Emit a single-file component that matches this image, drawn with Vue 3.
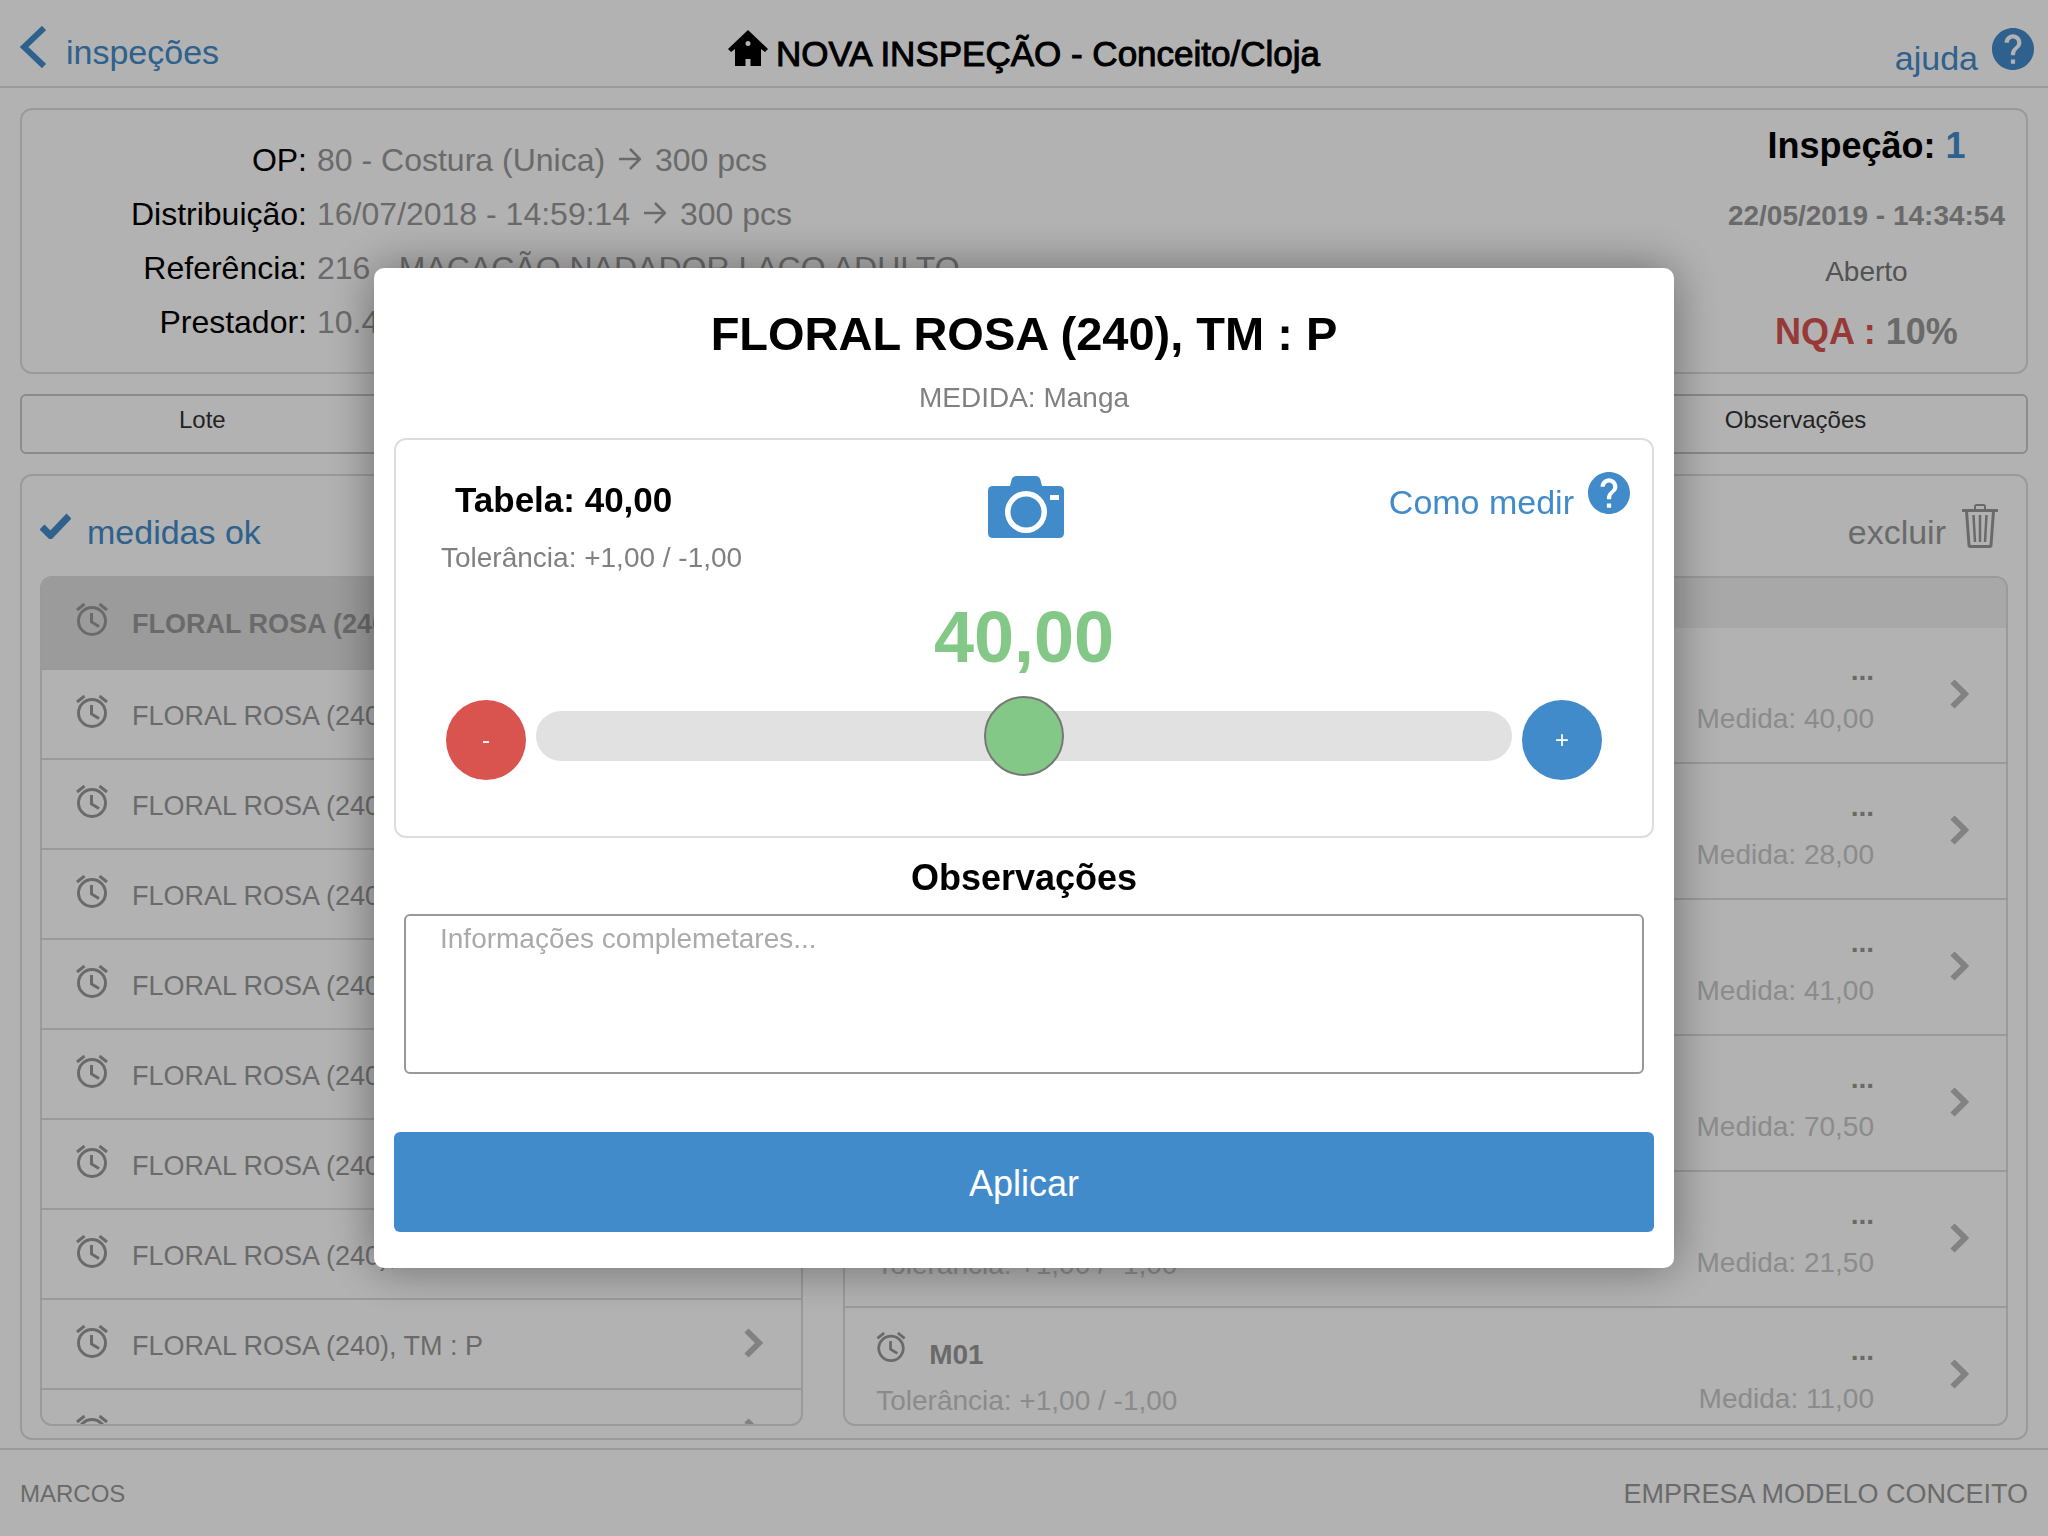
<template>
  <div class="page">
    <header class="topbar">
      <a href="#inspecoes" class="back-link">
        <svg class="back-icon" viewBox="0 0 26 42" aria-hidden="true">
          <path d="M24 2 4 21l20 19" fill="none" stroke="currentColor" stroke-width="6" />
        </svg>
        <span>inspeções</span>
      </a>
      <h1>
        <svg class="home-icon" viewBox="0 0 40 36" aria-hidden="true">
          <path
            fill="currentColor"
            fill-rule="evenodd"
            d="M20 0 40 19l-3 3-4-3v17H22.500v-7h-5v7H7V19l-4 3-3-3ZM20 11a2.500 2.500 0 1 0 0 5 2.500 2.500 0 0 0 0-5Z"
          />
        </svg>
        <span>NOVA INSPEÇÃO - Conceito/Cloja</span>
      </h1>
      <a href="#ajuda" class="help-link">
        <span>ajuda</span>
        <svg class="help-icon" viewBox="2 2 20 20" aria-hidden="true">
          <path :d="icons.help" fill="currentColor" />
        </svg>
      </a>
    </header>

    <main class="content">
      <section class="panel info">
        <dl class="details">
          <template v-for="item in details" :key="item.label">
            <dt>{{ item.label }}:</dt>
            <dd>
              {{ item.text }}
              <template v-if="item.amount">
                <svg class="arrow-icon" viewBox="0 0 22 24" aria-hidden="true">
                  <path d="M0 12h20M11 2l10 10-10 10" fill="none" stroke="currentColor" stroke-width="2.500" />
                </svg>
                {{ item.amount }}
              </template>
            </dd>
          </template>
        </dl>
        <div class="summary">
          <p class="summary-number">Inspeção: <span>1</span></p>
          <p class="summary-date">22/05/2019 - 14:34:54</p>
          <p class="summary-status">Aberto</p>
          <p class="summary-nqa">NQA : <span>10%</span></p>
        </div>
      </section>

      <nav class="tabs">
        <button type="button" class="tab-lote">Lote</button>
        <button type="button" class="tab-observacoes">Observações</button>
      </nav>

      <section class="panel measures">
        <div class="toolbar">
          <button type="button" class="toolbar-button ok">
            <svg class="check-icon" viewBox="0 0 31 26" aria-hidden="true">
              <path d="M2 14l8.500 8.500L29 3" fill="none" stroke="currentColor" stroke-width="7" />
            </svg>
            <span>medidas ok</span>
          </button>
          <button type="button" class="toolbar-button remove">
            <span>excluir</span>
            <svg class="trash-icon" viewBox="0 0 36 44" aria-hidden="true">
              <g fill="none" stroke="currentColor">
                <path d="M0 6.500h36" stroke-width="3" />
                <path d="M13 6V2.500q0-1.500 1.500-1.500h7q1.500 0 1.500 1.500V6" stroke-width="2" />
                <path d="M4.500 7l2.500 34q0 1.500 1.500 1.500h19q1.500 0 1.500-1.500L31.500 7" stroke-width="3" />
                <path d="M11.500 11l1.500 27M18 11v27M24.500 11L23 38" stroke-width="2.500" />
              </g>
            </svg>
          </button>
        </div>

        <div class="lists">
          <ul class="list products">
            <li v-for="n in 10" :key="n">
              <button
                type="button"
                class="product"
                :class="{ selected: n === selectedProduct }"
                @click="selectedProduct = n"
              >
                <svg class="alarm-icon" viewBox="0 0 32 33" aria-hidden="true">
                  <path :d="icons.alarm" fill="none" stroke="currentColor" stroke-width="3" />
                </svg>
                <span class="product-name">FLORAL ROSA (240), TM : P</span>
                <svg class="chevron-icon" viewBox="0 0 20 30" aria-hidden="true">
                  <path d="M2.500 2.500 15 15 2.500 27.500" fill="none" stroke="currentColor" stroke-width="6" />
                </svg>
              </button>
            </li>
          </ul>

          <div class="list">
            <div class="list-header"></div>
            <ul>
              <li v-for="(measure, index) in measures" :key="index">
                <button type="button" class="measure">
                  <span class="measure-main">
                    <span class="measure-name">
                      <svg class="alarm-icon small" viewBox="0 0 32 33" aria-hidden="true">
                        <path :d="icons.alarm" fill="none" stroke="currentColor" stroke-width="3" />
                      </svg>
                      <strong>{{ measure.name }}</strong>
                    </span>
                    <span class="measure-note">Tolerância: +1,00 / -1,00</span>
                  </span>
                  <span class="measure-value">
                    <strong>...</strong>
                    <span class="measure-note">Medida: {{ measure.value }}</span>
                  </span>
                  <svg class="chevron-icon" viewBox="0 0 20 30" aria-hidden="true">
                    <path d="M2.500 2.500 15 15 2.500 27.500" fill="none" stroke="currentColor" stroke-width="6" />
                  </svg>
                </button>
              </li>
            </ul>
          </div>
        </div>
      </section>
    </main>

    <footer class="footer">
      <span class="user">MARCOS</span>
      <span class="company">EMPRESA MODELO CONCEITO</span>
    </footer>

    <div class="backdrop">
      <form class="modal" role="dialog" aria-labelledby="modal-title" @submit.prevent>
        <h2 id="modal-title">FLORAL ROSA (240), TM : P</h2>
        <p class="modal-subtitle">MEDIDA: Manga</p>

        <section class="measure-card">
          <div class="card-top">
            <div class="card-table">
              <p class="table-value">Tabela: 40,00</p>
              <p class="tolerance">Tolerância: +1,00 / -1,00</p>
            </div>
            <button type="button" class="camera-button" aria-label="Foto">
              <svg class="camera-icon" viewBox="0 0 76 62" aria-hidden="true">
                <path
                  fill="currentColor"
                  fill-rule="evenodd"
                  d="M5 10h17l1.500-6q1-4 5-4h19q4 0 5 4l1.500 6h17q5 0 5 5v42q0 5-5 5H5q-5 0-5-5V15q0-5 5-5ZM38 15a21 21 0 1 0 0 42 21 21 0 0 0 0-42ZM62 19v5h9v-5Z"
                />
                <circle cx="38" cy="36" r="15.500" fill="currentColor" />
              </svg>
            </button>
            <a href="#como-medir" class="how-link">
              <span>Como medir</span>
              <svg class="help-icon" viewBox="2 2 20 20" aria-hidden="true">
                <path :d="icons.help" fill="currentColor" />
              </svg>
            </a>
          </div>

          <output class="current-value" for="medida">{{ formattedValue }}</output>

          <div class="slider-row">
            <button type="button" class="step minus" @click="changeValue(-0.5)">-</button>
            <input
              id="medida"
              v-model.number="value"
              type="range"
              min="30"
              max="50"
              step="0.5"
              aria-label="Medida"
            />
            <button type="button" class="step plus" @click="changeValue(0.5)">+</button>
          </div>
        </section>

        <label for="observacoes">Observações</label>
        <textarea id="observacoes" v-model="notes" placeholder="Informações complemetares..."></textarea>
        <button type="submit" class="apply-button">Aplicar</button>
      </form>
    </div>
  </div>
</template>

<script setup>
import { computed, ref } from 'vue';

const icons = {
  help: 'M12 2C6.48 2 2 6.48 2 12s4.48 10 10 10 10-4.480 10-10S17.520 2 12 2zm1 17h-2v-2h2v2zm2.070-7.750l-.9.920C13.450 12.900 13 13.500 13 15h-2v-.5c0-1.100.45-2.100 1.170-2.830l1.240-1.260c.37-.36.59-.86.59-1.410 0-1.100-.9-2-2-2s-2 .9-2 2H8c0-2.210 1.790-4 4-4s4 1.790 4 4c0 .88-.36 1.680-.93 2.250z',
  alarm: 'M16 4.500a13.500 13.500 0 1 0 0 27 13.500 13.500 0 0 0 0-27M15.500 10v9l7.500 4.500M1 7l7.500-6M31 7l-7.500-6',
};

const details = [
  { label: 'OP', text: '80 - Costura (Unica)', amount: '300 pcs' },
  { label: 'Distribuição', text: '16/07/2018 - 14:59:14', amount: '300 pcs' },
  { label: 'Referência', text: '216 - MACACÃO NADADOR LAÇO ADULTO' },
  { label: 'Prestador', text: '10.4' },
];

const measures = [
  { name: 'Manga', value: '40,00' },
  { name: 'M01', value: '28,00' },
  { name: 'M01', value: '41,00' },
  { name: 'M01', value: '70,50' },
  { name: 'M01', value: '21,50' },
  { name: 'M01', value: '11,00' },
];

const selectedProduct = ref(1);
const value = ref(40);
const notes = ref('');

const formattedValue = computed(() => value.value.toFixed(2).replace('.', ','));

const changeValue = (amount) => {
  value.value = Math.min(50, Math.max(30, value.value + amount));
};
</script>

<style>
body {
  margin: 0;
  background-color: #fff;
}
</style>

<style scoped>
.page {
  display: flex;
  flex-direction: column;
  height: 100vh;
  overflow: hidden;
  color: #000;
  font-family: "Liberation Sans", Arial, sans-serif;
  font-size: 28px;
}

.page * {
  box-sizing: border-box;
}

h1,
h2,
p,
dl,
dd,
ul {
  margin: 0;
  padding: 0;
}

ul {
  list-style: none;
}

svg {
  display: block;
  flex: none;
}

a {
  color: #428bca;
  text-decoration: none;
}

button {
  padding: 0;
  border: none;
  background: none;
  color: inherit;
  font: inherit;
  cursor: pointer;
}

.topbar {
  display: grid;
  flex: none;
  grid-template-columns: 1fr auto 1fr;
  align-items: start;
  height: 88px;
  padding: 26px 14px 0;
  border-bottom: 2px solid #ddd;
  font-size: 34px;
}

.back-link,
.help-link,
h1 {
  display: flex;
  align-items: flex-start;
}

.back-link {
  gap: 20px;
  padding-left: 6px;
  line-height: 52px;
}

.back-icon {
  width: 26px;
  height: 42px;
}

h1 {
  gap: 8px;
  font-size: 35px;
  font-weight: 500;
  line-height: 56px;
  -webkit-text-stroke: 1px currentColor;
}

.home-icon {
  width: 40px;
  height: 36px;
  margin-top: 4px;
}

.help-link {
  justify-content: flex-end;
  gap: 14px;
  line-height: 64px;
}

.help-icon {
  width: 42px;
  height: 42px;
  margin-top: 2px;
}

.content {
  display: flex;
  flex: 1;
  flex-direction: column;
  gap: 20px;
  min-height: 0;
  padding: 20px 20px 8px;
}

.panel {
  border: 2px solid #ddd;
  border-radius: 12px;
}

.info {
  display: flex;
  justify-content: space-between;
  padding: 0 21px 2px 0;
}

.details {
  display: grid;
  grid-template-columns: 285px auto;
  align-content: start;
  column-gap: 10px;
  padding-top: 23px;
  font-size: 32px;
  line-height: 54px;
}

dt {
  text-align: right;
}

dd {
  color: #999;
}

.arrow-icon {
  display: inline-block;
  width: 22px;
  height: 24px;
  margin: 0 5px;
}

.summary {
  text-align: center;
}

.summary-number {
  font-size: 36px;
  font-weight: bold;
  line-height: 72px;
}

.summary-number span {
  color: #428bca;
}

.summary-date {
  color: #999;
  font-weight: bold;
  line-height: 68px;
}

.summary-status {
  color: #777;
  line-height: 44px;
}

.summary-nqa {
  color: #d9534f;
  font-size: 36px;
  font-weight: bold;
  line-height: 76px;
}

.summary-nqa span {
  color: #999;
}

.tabs {
  display: flex;
  justify-content: space-between;
  border: 2px solid #c7c7c7;
  border-radius: 6px;
}

.tabs button {
  padding-bottom: 8px;
  color: #333;
  font-size: 24px;
  line-height: 48px;
}

.tab-lote {
  width: 18%;
}

.tab-observacoes {
  width: 23%;
}

.measures {
  display: flex;
  flex: 1;
  flex-direction: column;
  min-height: 0;
  padding: 0 18px 12px;
}

.toolbar {
  display: flex;
  flex: none;
  align-items: center;
  justify-content: space-between;
  height: 100px;
  padding-right: 10px;
}

.toolbar-button {
  display: flex;
  align-items: center;
  gap: 16px;
  font-size: 34px;
}

.toolbar-button span {
  padding-top: 12px;
}

.toolbar-button.ok {
  color: #428bca;
}

.toolbar-button.remove {
  color: #999;
}

.check-icon {
  width: 31px;
  height: 26px;
}

.trash-icon {
  width: 36px;
  height: 44px;
}

.lists {
  display: grid;
  flex: 1;
  grid-template-columns: calc(40% - 24px) minmax(0, 1fr);
  grid-template-rows: minmax(0, 1fr);
  column-gap: 40px;
  min-height: 0;
}

.list {
  overflow: hidden;
  border: 2px solid #ddd;
  border-radius: 12px;
}

.list-header {
  height: 50px;
  background-color: #f1f1f1;
}

.product {
  display: flex;
  align-items: center;
  width: 100%;
  height: 90px;
  padding: 0 37px 2px 34px;
  border-bottom: 2px solid #ddd;
  color: #999;
  font-size: 27px;
  text-align: left;
}

.product.selected {
  height: 92px;
  padding-bottom: 4px;
  background-color: #dfdfdf;
  font-weight: bold;
}

.product-name {
  flex: 1;
  padding: 7px 0 0 24px;
}

.alarm-icon {
  width: 32px;
  height: 33px;
  margin-bottom: 4px;
}

.alarm-icon.small {
  width: 30px;
  height: 30px;
}

.chevron-icon {
  width: 20px;
  height: 30px;
  color: #bbb;
}

.measure {
  display: flex;
  width: 100%;
  height: 136px;
  padding: 0 36px 2px 31px;
  border-bottom: 2px solid #ddd;
  color: #999;
}

.measure-main,
.measure-value {
  display: flex;
  flex-direction: column;
}

.measure-main {
  flex: 1;
  padding-top: 24px;
  line-height: 46px;
  text-align: left;
}

.measure-name {
  display: flex;
  gap: 23px;
}

.measure-value {
  padding-top: 19px;
  line-height: 48px;
  text-align: right;
}

.measure-note {
  color: #c8c8c8;
}

.measure .chevron-icon {
  align-self: center;
  margin-left: 76px;
}

.footer {
  display: flex;
  flex: none;
  align-items: center;
  justify-content: space-between;
  height: 88px;
  padding: 2px 20px 0;
  border-top: 2px solid #ddd;
  color: #999;
}

.user {
  font-size: 24px;
}

.company {
  font-size: 27px;
}

.backdrop {
  position: fixed;
  inset: 0;
  display: flex;
  align-items: center;
  justify-content: center;
  background-color: rgba(0, 0, 0, 0.3);
}

.modal {
  width: 1300px;
  max-width: 100%;
  padding: 26px 20px 36px;
  border-radius: 10px;
  background-color: #fff;
  box-shadow: 0 0 48px rgba(0, 0, 0, 0.4);
  text-align: center;
}

h2 {
  font-size: 47px;
  line-height: 80px;
}

.modal-subtitle {
  margin-bottom: 16px;
  color: #808080;
  line-height: 48px;
}

.measure-card {
  padding: 31px 0 56px;
  border: 2px solid #ddd;
  border-radius: 12px;
}

.card-top {
  display: grid;
  grid-template-columns: 1fr auto 1fr;
  align-items: start;
}

.card-table {
  padding-left: 45px;
  line-height: 58px;
  text-align: left;
}

.table-value {
  padding-left: 14px;
  font-size: 35px;
  font-weight: bold;
}

.tolerance {
  color: #808080;
}

.camera-button {
  padding: 5px 0 0 4px;
  color: #428bca;
}

.camera-icon {
  width: 76px;
  height: 62px;
}

.how-link {
  display: flex;
  align-items: flex-start;
  justify-content: flex-end;
  gap: 14px;
  padding-right: 22px;
  font-size: 34px;
  line-height: 62px;
}

.how-link .help-icon {
  margin-top: 1px;
}

.current-value {
  display: block;
  color: #83c887;
  font-size: 72px;
  font-weight: bold;
  line-height: 100px;
}

.slider-row {
  display: flex;
  align-items: flex-start;
  gap: 10px;
  margin-top: 13px;
  padding: 0 50px;
}

.step {
  flex: none;
  width: 80px;
  height: 80px;
  border-radius: 50%;
  color: #fff;
  font-size: 24px;
}

.minus {
  background-color: #d9534f;
}

.plus {
  background-color: #428bca;
}

input[type="range"] {
  flex: 1;
  min-width: 0;
  height: 80px;
  margin: -4px 0 0;
  background: none;
  appearance: none;
}

input[type="range"]::-webkit-slider-runnable-track {
  height: 50px;
  border-radius: 25px;
  background-color: #e1e1e1;
}

input[type="range"]::-webkit-slider-thumb {
  width: 80px;
  height: 80px;
  margin-top: -15px;
  border: 2px solid #777;
  border-radius: 50%;
  background-color: #83c887;
  appearance: none;
}

label {
  display: block;
  padding-top: 4px;
  font-size: 36px;
  font-weight: bold;
  line-height: 72px;
}

textarea {
  display: block;
  width: calc(100% - 20px);
  height: 160px;
  margin: 0 10px 58px;
  padding: 5px 34px;
  border: 2px solid #999;
  border-radius: 6px;
  font: inherit;
  line-height: 36px;
  resize: none;
}

textarea::placeholder {
  color: #aaa;
}

.apply-button {
  width: 100%;
  height: 100px;
  padding-top: 4px;
  border-radius: 6px;
  background-color: #428bca;
  color: #fff;
  font-size: 36px;
}
</style>
